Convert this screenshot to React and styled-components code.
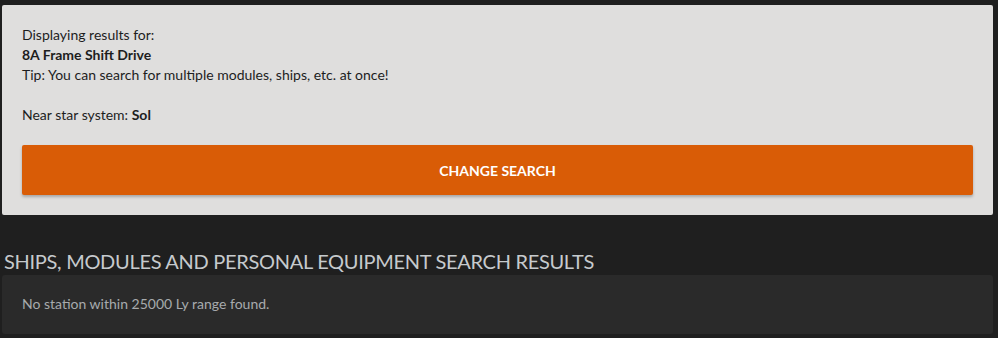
import styled, { createGlobalStyle } from "styled-components"

const GlobalStyle = createGlobalStyle`
  html, body {
    margin: 0;
    padding: 0;
    background-color: #1f1f1f;
    font-family: Lato, "Open Sans", sans-serif;
  }
`

const Page = styled.div`
  padding: 5px 5px 0 2px;
  display: flex;
  flex-direction: column;
`

const SearchPanel = styled.div`
  background-color: #dfdedd;
  border-radius: 2px;
  padding: 20px;
  color: #1d1d1d;
  font-size: 14px;
  line-height: 20px;
`

const Line = styled.p`
  margin: 0;
  min-height: 20px;
  font-weight: ${(props) => (props.bold ? 700 : 400)};
  b {
    font-weight: 700;
  }
`

const ChangeButton = styled.button`
  display: block;
  width: 100%;
  height: 50px;
  margin-top: 20px;
  border: none;
  border-radius: 2px;
  background-color: #d95c06;
  color: #fff;
  font-family: inherit;
  font-size: 14px;
  font-weight: 700;
  text-transform: uppercase;
  box-shadow: 0 2px 3px rgba(0, 0, 0, 0.25);
  cursor: pointer;
`

const Heading = styled.h2`
  margin: 32px 0 0 2px;
  font-size: 20px;
  font-weight: 400;
  line-height: 28px;
  letter-spacing: -0.3px;
  color: #c6cacd;
  text-transform: uppercase;
`

const ResultsBox = styled.div`
  background-color: #2a2a2a;
  border-radius: 3px;
  padding: 19px 20px;
  height: 59px;
  box-sizing: border-box;
  color: #a7aaad;
  font-size: 14px;
  line-height: 19px;
`

export default function App() {
  return (
    <>
      <GlobalStyle />
      <Page>
        <SearchPanel>
          <Line>Displaying results for:</Line>
          <Line bold>8A Frame Shift Drive</Line>
          <Line>Tip: You can search for multiple modules, ships, etc. at once!</Line>
          <Line />
          <Line>
            Near star system: <b>Sol</b>
          </Line>
          <ChangeButton>Change search</ChangeButton>
        </SearchPanel>
        <Heading>Ships, modules and personal equipment search results</Heading>
        <ResultsBox>No station within 25000 Ly range found.</ResultsBox>
      </Page>
    </>
  )
}
